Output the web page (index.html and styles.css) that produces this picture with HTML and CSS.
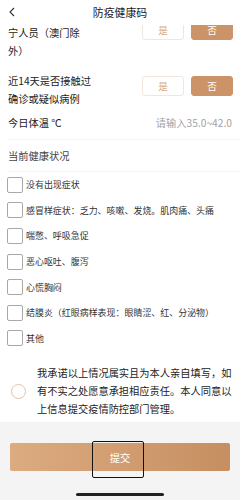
FILE: index.html
```html
<!DOCTYPE html>
<html lang="zh-CN">
<head>
<meta charset="utf-8">
<title>防疫健康码</title>
<link rel="stylesheet" href="styles.css">
</head>
<body>
<header class="topbar">
  <svg class="back" width="8" height="10" viewBox="0 0 8 10"><path d="M6 1 L2 5 L6 9" fill="none" stroke="#333" stroke-width="1.1"/></svg>
  <div class="title">防疫健康码</div>
</header>
<main class="content">
  <div class="qrow first">
    <div class="qlabel">近14天是否境外来宁人员（澳门除外）</div>
    <div class="choices">
      <span class="choice">是</span>
      <span class="choice on">否</span>
    </div>
  </div>
  <div class="qrow second">
    <div class="qlabel">近14天是否接触过确诊或疑似病例</div>
    <div class="choices">
      <span class="choice">是</span>
      <span class="choice on">否</span>
    </div>
  </div>
  <div class="temp">
    <span>今日体温 ℃</span>
    <span class="ph">请输入35.0~42.0</span>
  </div>
  <div class="section">当前健康状况</div>
  <ul class="checks">
    <li><span class="box"></span>没有出现症状</li>
    <li><span class="box"></span>感冒样症状：乏力、咳嗽、发烧。肌肉痛、头痛</li>
    <li><span class="box"></span>喘憋、呼吸急促</li>
    <li><span class="box"></span>恶心呕吐、腹泻</li>
    <li><span class="box"></span>心慌胸闷</li>
    <li><span class="box"></span>结膜炎（红眼病样表现：眼睛涩、红、分泌物）</li>
    <li><span class="box"></span>其他</li>
  </ul>
  <div class="agree">
    <span class="radio"></span>
    <p class="agree-text">我承诺以上情况属实且为本人亲自填写，如有不实之处愿意承担相应责任。本人同意以上信息提交疫情防控部门管理。</p>
  </div>
</main>
<footer class="footer">
  <button class="submit">提交<span class="focus"></span></button>
  <div class="home"></div>
</footer>
</body>
</html>
```
FILE: styles.css
```css
* { box-sizing: border-box; }
html, body { margin: 0; padding: 0; }
body {
  width: 240px;
  height: 500px;
  overflow: hidden;
  background: #fff;
  font-family: "Noto Sans CJK SC", "Noto Sans", sans-serif;
  color: #222;
  font-size: 10.24px;
}
.topbar {
  position: fixed;
  top: 0;
  left: 0;
  width: 240px;
  height: 25px;
  background: #fff;
  z-index: 5;
  display: flex;
  align-items: center;
  justify-content: center;
}
.back { position: absolute; left: 8px; top: 7px; }
.title { font-size: 10.9px; color: #222; line-height: 14px; margin-top: -1px; }
.content { padding-top: 6px; }
.qrow {
  display: flex;
  align-items: center;
  justify-content: space-between;
  padding: 0 7px 0 8px;
}
.qrow.second { margin-top: 12px; }
.qlabel { width: 86px; line-height: 18px; color: #222; }
.first .choices { margin-bottom: 6px; }
.second .choices { margin-bottom: 8px; }
.choices { display: flex; gap: 7px; }
.choice {
  width: 42px;
  height: 20px;
  border-radius: 3px;
  border: 1px solid #f1e6dd;
  background: #fff;
  color: #d9ae88;
  font-size: 9.6px;
  display: flex;
  align-items: center;
  justify-content: center;
}
.choice.on {
  background: #cb9367;
  border-color: #cb9367;
  color: #fff;
}
.temp {
  margin-top: 6px;
  margin-left: 8px;
  padding: 0 8px 7px 0;
  line-height: 18px;
  display: flex;
  justify-content: space-between;
  border-bottom: 1px solid #f3f3f3;
}
.ph { color: #a3a3a3; }
.section {
  padding: 7px 0 6px 0;
  margin-left: 8px;
  line-height: 18px;
  color: #444;
  border-bottom: 1px solid #f3f3f3;
}
.checks { list-style: none; margin: 0; padding: 0 0 0 7px; }
.checks li {
  height: 25.6px;
  display: flex;
  align-items: center;
  font-size: 8.96px;
  color: #333;
}
.box {
  width: 16px;
  height: 16px;
  border: 1px solid #a8a8a8;
  border-radius: 2px;
  margin-right: 3px;
  flex: none;
}
.agree {
  margin-top: 13px;
  display: flex;
  align-items: center;
  padding: 0 8px 0 11px;
}
.radio {
  width: 15px;
  height: 15px;
  border-radius: 50%;
  border: 1px solid #e6c2a2;
  flex: none;
  margin-right: 11px;
}
.agree-text {
  margin: 0;
  line-height: 18px;
  width: 195px;
  color: #222;
}
.footer {
  margin-top: 4px;
  height: 78px;
  background: #f4f4f4;
  padding: 21px 10px 0 10px;
}
.submit {
  position: relative;
  display: flex;
  align-items: center;
  justify-content: center;
  width: 220px;
  height: 28px;
  border: none;
  border-radius: 2px;
  background: linear-gradient(90deg, #dcab80, #c68f62);
  color: #fff;
  font-family: inherit;
  font-size: 10.24px;
  padding: 0;
}
.focus {
  position: absolute;
  left: 82px;
  top: -2px;
  width: 52px;
  height: 37px;
  border: 1.5px solid #111;
  border-radius: 2px;
}
.home {
  width: 88px;
  height: 3px;
  border-radius: 2px;
  background: #222;
  margin: 22px auto 0 auto;
}
```
